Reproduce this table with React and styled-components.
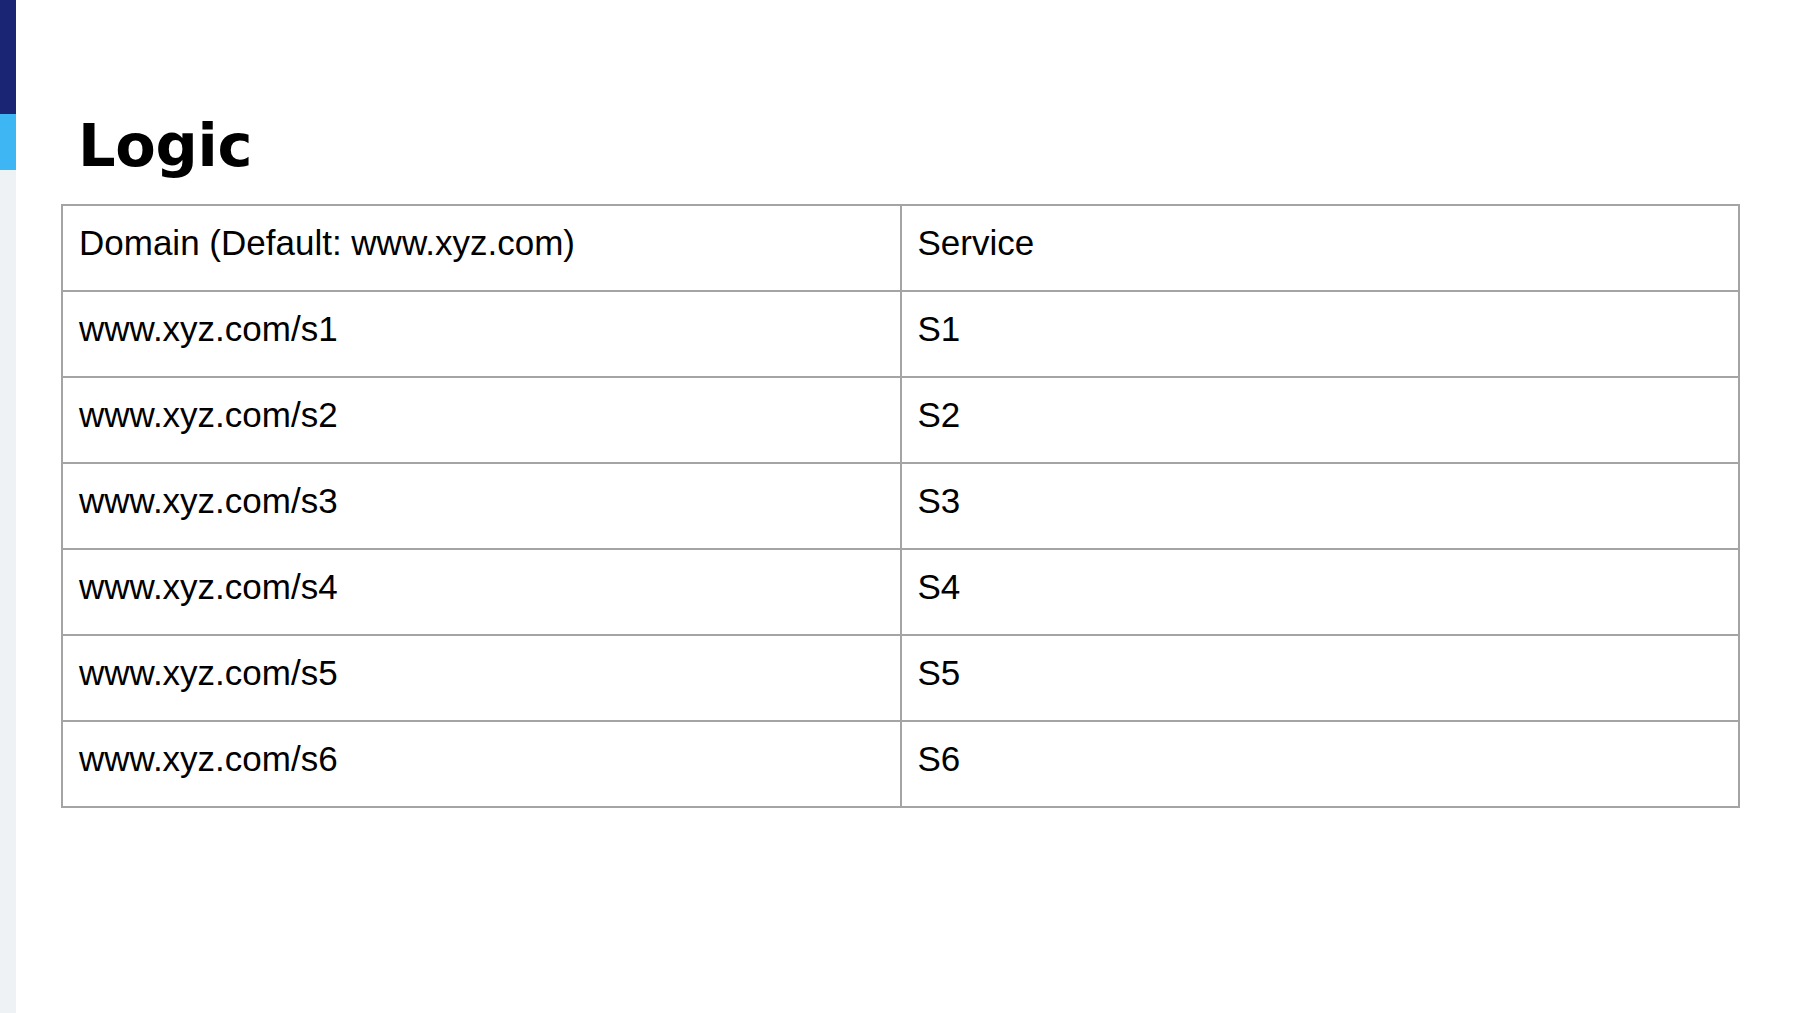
import React from 'react';
import styled, { createGlobalStyle } from 'styled-components';

const GlobalStyle = createGlobalStyle`
  html, body {
    margin: 0;
    padding: 0;
    background: #ffffff;
  }
`;

const Page = styled.div`
  display: flex;
  width: 1800px;
  height: 1013px;
  background: #ffffff;
  overflow: hidden;
`;

const SideBar = styled.div`
  display: flex;
  flex-direction: column;
  width: 16px;
  flex-shrink: 0;
  background: #eef2f4;
`;

const SideStripe = styled.div`
  height: ${(p) => p.h}px;
  background: ${(p) => p.color};
`;

const Main = styled.main`
  flex: 1;
  padding: 104px 60px 0 45px;
`;

const Title = styled.h1`
  margin: 0 0 16px 17px;
  font-family: 'DejaVu Sans', sans-serif;
  font-weight: 700;
  font-size: 59px;
  line-height: 84px;
  letter-spacing: -0.3px;
  color: #000000;
`;

const Table = styled.table`
  width: 100%;
  border-collapse: collapse;
  table-layout: fixed;
  border: 2px solid #a4a4a4;
  font-family: 'Liberation Sans', Arial, sans-serif;
  font-size: 35px;
  color: #000000;
`;

const Cell = styled.td`
  height: 86px;
  box-sizing: border-box;
  padding: 17px 15px 0 16px;
  vertical-align: top;
  line-height: 40px;
  border: 2px solid #a4a4a4;
`;

const rows = [
  ['Domain (Default: www.xyz.com)', 'Service'],
  ['www.xyz.com/s1', 'S1'],
  ['www.xyz.com/s2', 'S2'],
  ['www.xyz.com/s3', 'S3'],
  ['www.xyz.com/s4', 'S4'],
  ['www.xyz.com/s5', 'S5'],
  ['www.xyz.com/s6', 'S6'],
];

export default function App() {
  return (
    <>
      <GlobalStyle />
      <Page>
        <SideBar>
          <SideStripe h={114} color="#1a2673" />
          <SideStripe h={56} color="#3eb6f4" />
        </SideBar>
        <Main>
          <Title>Logic</Title>
          <Table>
            <tbody>
              {rows.map(([domain, service]) => (
                <tr key={domain}>
                  <Cell>{domain}</Cell>
                  <Cell>{service}</Cell>
                </tr>
              ))}
            </tbody>
          </Table>
        </Main>
      </Page>
    </>
  );
}
